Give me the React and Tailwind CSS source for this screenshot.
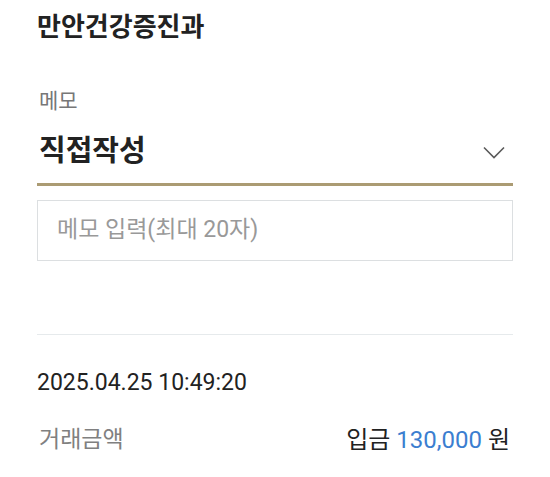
import React from "react";

const font = { fontFamily: 'Roboto, "Noto Sans CJK KR", sans-serif' };

const Chevron = () => (
  <svg width="22" height="13" viewBox="0 0 22 13" fill="none" stroke="#5a5a5a" strokeWidth="1.6">
    <path d="M1 1.5l10 10 10-10" />
  </svg>
);

const App = () => {
  return (
    <div className="min-h-screen bg-white px-[37px]" style={font}>
      <h1 className="pt-[9px] text-[26px] font-semibold leading-[36px] text-[#222]">만안건강증진과</h1>

      <div className="mt-[42px]">
        <p className="pl-[2px] text-[21px] leading-[28px] text-[#777]">메모</p>
        <div className="mt-[18px] flex items-center justify-between border-b-[3px] border-[#ab9b73] pb-[14px]">
          <span className="pl-[2px] text-[29px] font-bold leading-[36px] text-[#222]">직접작성</span>
          <span className="mr-[8px] mt-[2px]">
            <Chevron />
          </span>
        </div>
      </div>

      <div className="mt-[14px] flex h-[61px] items-center border border-[#dcdfe1] pl-[19px]">
        <span className="text-[23px] text-[#999]">메모 입력(최대 20자)</span>
      </div>

      <div className="mt-[73px] border-t border-[#e6eaec]" />

      <p className="mt-[33px] text-[23px] leading-[30px] text-[#222]">2025.04.25 10:49:20</p>

      <div className="mt-[26px] flex items-center justify-between pr-[3px] leading-[32px]">
        <span className="pl-[2px] text-[23px] text-[#808080]">거래금액</span>
        <span className="text-[24px] text-[#222]">
          입금 <span className="text-[#3b7ed0]">130,000</span> 원
        </span>
      </div>
    </div>
  );
};

export default App;
